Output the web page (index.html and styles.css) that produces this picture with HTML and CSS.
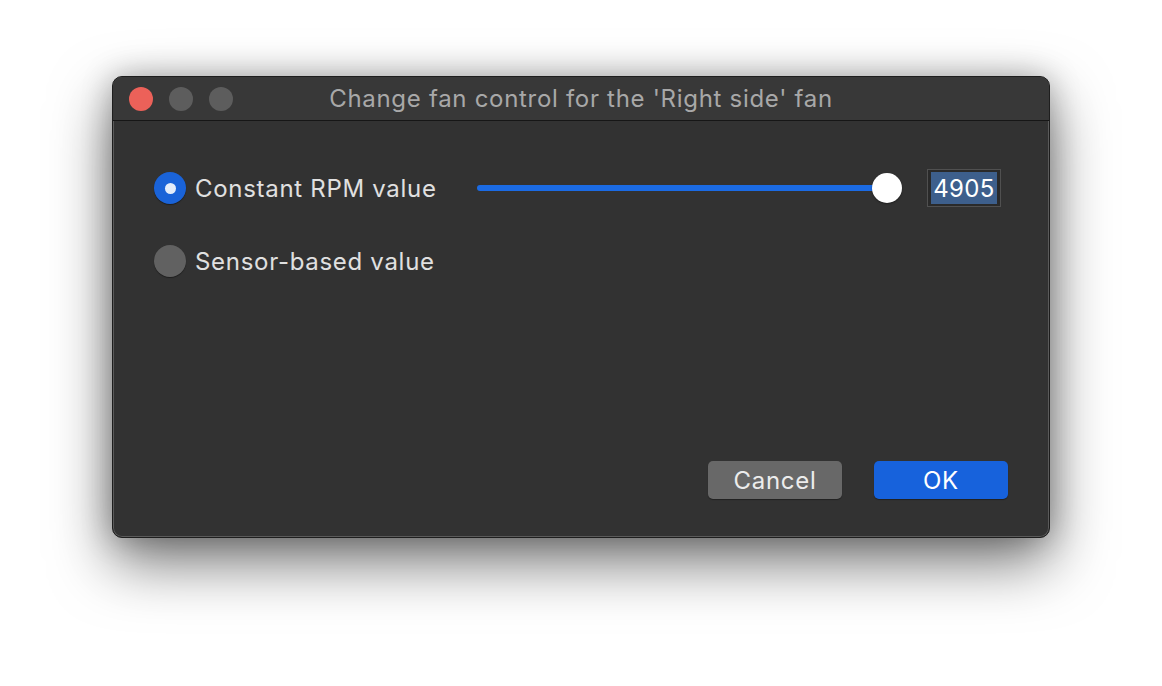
FILE: index.html
```html
<!DOCTYPE html>
<html>
<head>
<meta charset="utf-8">
<link rel="stylesheet" href="styles.css">
</head>
<body>
<div class="window">
  <div class="titlebar">
    <div class="lights">
      <span class="light red"></span>
      <span class="light gray"></span>
      <span class="light gray"></span>
    </div>
    <div class="title">Change fan control for the 'Right side' fan</div>
  </div>
  <div class="content">
    <div class="row row-first">
      <span class="radio on"><span class="dot"></span></span>
      <span class="label">Constant RPM value</span>
      <div class="slider">
        <div class="track"></div>
        <div class="thumb"></div>
      </div>
      <div class="field"><span class="sel">4905</span></div>
    </div>
    <div class="row row-second">
      <span class="radio off"></span>
      <span class="label">Sensor-based value</span>
    </div>
    <div class="spacer"></div>
    <div class="buttons">
      <button class="btn cancel">Cancel</button>
      <button class="btn ok">OK</button>
    </div>
  </div>
</div>
</body>
</html>
```
FILE: styles.css
```css
html, body {
  margin: 0;
  padding: 0;
  background: #ffffff;
}
body {
  padding: 76px 0 0 112px;
  min-height: 686px;
  box-sizing: border-box;
  font-family: Inter, "Liberation Sans", Arial, sans-serif;
  letter-spacing: 0.7px;
}
.window {
  width: 938px;
  height: 462px;
  box-sizing: border-box;
  background: #323232;
  border: 1px solid #1e1e1e;
  border-radius: 10px;
  box-shadow: 0 0 0 1px #5a5a5a inset, 0 24px 60px rgba(0,0,0,0.55), 0 0 30px rgba(0,0,0,0.25);
  display: flex;
  flex-direction: column;
  overflow: hidden;
}
.titlebar {
  height: 43px;
  flex: none;
  background: #383838;
  border-bottom: 1px solid #161616;
  display: flex;
  align-items: center;
  position: relative;
}
.lights {
  display: flex;
  gap: 16px;
  padding-left: 16px;
  position: relative;
  z-index: 1;
}
.light {
  width: 24px;
  height: 24px;
  border-radius: 50%;
  display: block;
}
.red { background: #ec6159; }
.gray { background: #5d5d5d; }
.title {
  position: absolute;
  left: 0;
  right: 0;
  top: 0;
  bottom: 0;
  display: flex;
  align-items: center;
  justify-content: center;
  color: #a8a8a8;
  font-size: 24px;
}
.content {
  flex: 1;
  display: flex;
  flex-direction: column;
  padding: 48px 41px 38px 41px;
}
.row {
  display: flex;
  align-items: center;
  height: 38px;
}
.row-second {
  margin-top: 35px;
}
.radio {
  width: 32px;
  height: 32px;
  border-radius: 50%;
  box-sizing: border-box;
  display: flex;
  align-items: center;
  justify-content: center;
  flex: none;
}
.radio.on {
  background: #1a63d8;
  box-shadow: 0 1px 1px rgba(0,0,0,0.4);
}
.radio.on .dot {
  width: 11px;
  height: 11px;
  border-radius: 50%;
  background: #e4edfa;
}
.radio.off {
  background: #616161;
  box-shadow: 0 1px 1px rgba(0,0,0,0.4);
}
.label {
  color: #e0e0e0;
  font-size: 24px;
  margin-left: 9px;
}
.slider {
  position: relative;
  flex: 1;
  height: 32px;
  margin-left: 40px;
  display: flex;
  align-items: center;
}
.track {
  flex: 1;
  margin-right: 14px;
  height: 6px;
  border-radius: 3px;
  background: #1b6be4;
}
.thumb {
  position: absolute;
  right: 0;
  top: 1px;
  width: 30px;
  height: 30px;
  border-radius: 50%;
  background: #ffffff;
  box-shadow: 0 1px 2px rgba(0,0,0,0.4);
}
.field {
  margin-left: 25px;
  margin-right: 7px;
  width: 74px;
  height: 38px;
  flex: none;
  box-sizing: border-box;
  border: 1px solid #505050;
  background: #2a2a2a;
  padding: 2px 3px;
  display: flex;
}
.sel {
  flex: 1;
  background: #3d5f8c;
  color: #ffffff;
  font-size: 24px;
  letter-spacing: 0.4px;
  display: flex;
  align-items: center;
  justify-content: center;
}
.spacer { flex: 1; }
.buttons {
  display: flex;
  justify-content: flex-end;
  gap: 32px;
}
.btn {
  width: 134px;
  height: 38px;
  border: none;
  border-radius: 5px;
  font-family: Inter, "Liberation Sans", Arial, sans-serif;
  letter-spacing: 0.7px;
  font-size: 24px;
  color: #ececec;
  box-shadow: 0 1px 1px rgba(0,0,0,0.35);
}
.cancel { background: #686868; }
.ok { background: #1762dc; color: #ffffff; }
```
